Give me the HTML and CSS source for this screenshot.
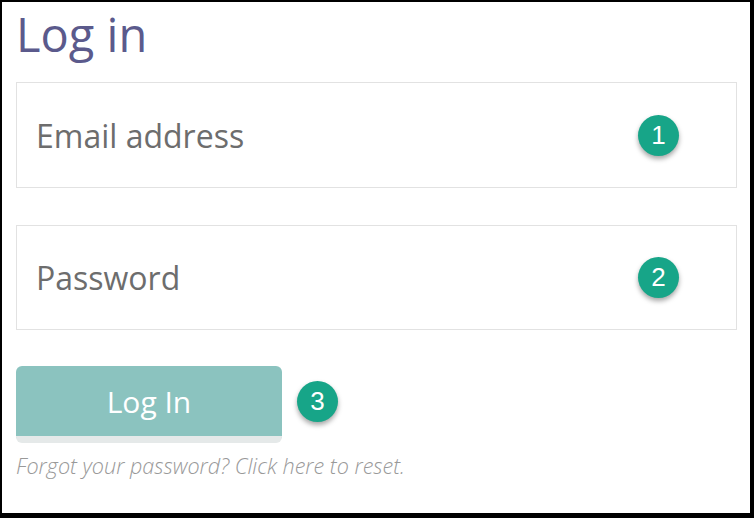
FILE: index.html
```html
<!DOCTYPE html>
<html lang="en">
<head>
    <meta charset="UTF-8">
    <meta name="viewport" content="width=device-width, initial-scale=1.0">
    <title>Log in</title>
    <link rel="stylesheet" href="styles.css">
</head>
<body>
    <div class="frame">
        <h1>Log in</h1>

        <!-- Fields -->
        <div class="field">
            <span class="placeholder">Email address</span>
            <span class="step">1</span>
        </div>
        <div class="field">
            <span class="placeholder">Password</span>
            <span class="step">2</span>
        </div>

        <!-- Submit -->
        <div class="submit-row">
            <button class="login-btn">Log In</button>
            <span class="step step-btn">3</span>
        </div>

        <p class="forgot">Forgot your password? Click here to reset.</p>
    </div>
</body>
</html>
```

FILE: styles.css
```css
/* Reset */
* {
    margin: 0;
    padding: 0;
    box-sizing: border-box;
}
body {
    font-family: 'Open Sans', sans-serif;
    background-color: #ffffff;
    width: 754px;
    height: 518px;
    overflow: hidden;
}
.frame {
    width: 754px;
    height: 518px;
    border-style: solid;
    border-color: #000000;
    border-width: 2px 4px 5px 2px;
    padding: 0 13px 0 14px;
    display: flex;
    flex-direction: column;
}
h1 {
    font-size: 47px;
    font-weight: 400;
    line-height: 48px;
    color: #5b5a8c;
    margin-top: 8px;
    margin-bottom: 24px;
}
.field {
    height: 106px;
    border: 1px solid #e2e2e2;
    display: flex;
    align-items: center;
    justify-content: space-between;
    padding: 0 57px 0 19px;
    margin-bottom: 37px;
}
.field + .field {
    height: 105px;
    margin-bottom: 36px;
}
.placeholder {
    font-size: 32px;
    color: #6d6d6d;
}
.step {
    width: 41px;
    height: 41px;
    border-radius: 50%;
    background-color: #17a588;
    color: #ffffff;
    font-family: 'Liberation Sans', Arial, sans-serif;
    font-size: 26px;
    display: flex;
    align-items: center;
    justify-content: center;
    box-shadow: 0 3px 5px rgba(0, 0, 0, 0.35);
}
.submit-row {
    display: flex;
    align-items: flex-start;
    gap: 15px;
}
.login-btn {
    width: 266px;
    height: 77px;
    border: none;
    border-bottom: 7px solid #e5e9e9;
    border-radius: 6px;
    background-color: #8bc3bf;
    color: #ffffff;
    font-family: 'Open Sans', sans-serif;
    font-size: 30px;
    cursor: pointer;
}
.step-btn {
    margin-top: 15px;
}
.forgot {
    margin-top: 8px;
    font-size: 21.6px;
    font-weight: 300;
    font-style: italic;
    color: #999999;
}
```
